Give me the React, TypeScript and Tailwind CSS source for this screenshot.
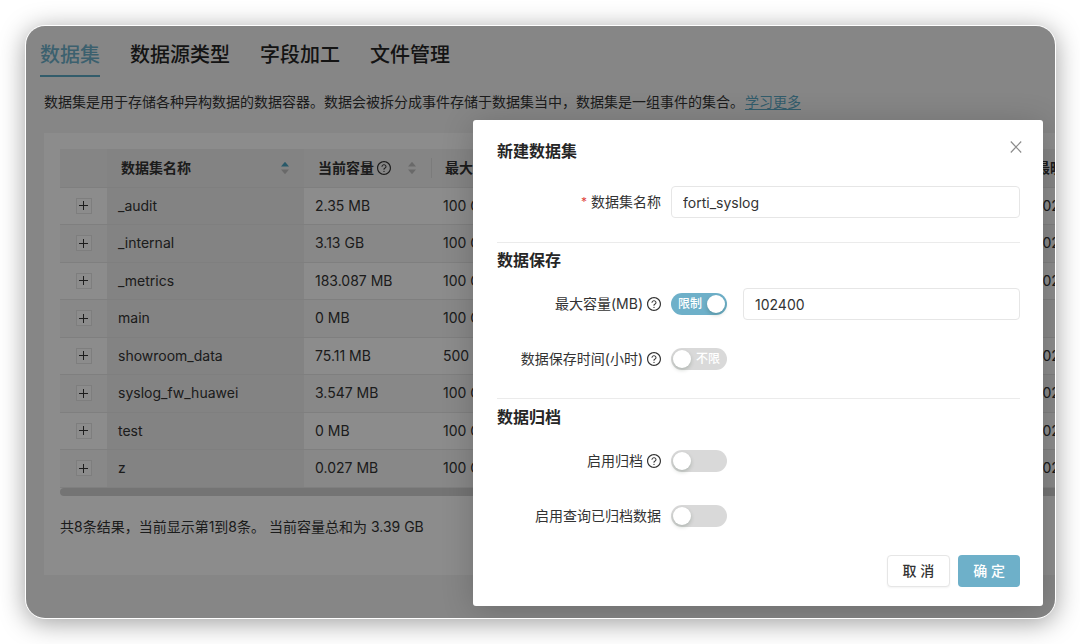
import { useState } from "react";
import type { ReactNode } from "react";

const tabs = ["数据集", "数据源类型", "字段加工", "文件管理"];

const rows = [
  { name: "_audit", used: "2.35 MB", max: "100 GB", latest: "2023" },
  { name: "_internal", used: "3.13 GB", max: "100 GB", latest: "2023" },
  { name: "_metrics", used: "183.087 MB", max: "100 GB", latest: "2023" },
  { name: "main", used: "0 MB", max: "100 GB", latest: "" },
  { name: "showroom_data", used: "75.11 MB", max: "500 GB", latest: "2023" },
  { name: "syslog_fw_huawei", used: "3.547 MB", max: "100 GB", latest: "2023" },
  { name: "test", used: "0 MB", max: "100 GB", latest: "2023" },
  { name: "z", used: "0.027 MB", max: "100 GB", latest: "2023" },
];

function HelpIcon() {
  return (
    <svg viewBox="64 64 896 896" className="size-[14px] shrink-0" fill="currentColor" aria-hidden="true">
      <path d="M512 64C264.6 64 64 264.6 64 512s200.600 448 448 448 448-200.600 448-448S759.400 64 512 64zm0 820c-205.400 0-372-166.600-372-372s166.600-372 372-372 372 166.600 372 372-166.600 372-372 372z" />
      <path d="M623.600 316.700C593.600 290.400 554 276 512 276s-81.600 14.500-111.600 40.700C369.200 344 352 380.700 352 420v7.600c0 4.400 3.600 8 8 8h48c4.400 0 8-3.600 8-8V420c0-44.100 43.100-80 96-80s96 35.900 96 80c0 31.100-22 59.600-56.100 72.700-21.200 8.100-39.200 22.300-52.100 40.900-13.100 19-19.900 41.800-19.900 64.900V620c0 4.400 3.600 8 8 8h48c4.400 0 8-3.600 8-8v-22.700a48.300 48.300 0 0 1 30.900-44.800c59-22.700 97.100-74.700 97.100-132.500.1-39.300-17.100-76-48.300-103.300zM472 732a40 40 0 1 0 80 0 40 40 0 1 0-80 0z" />
    </svg>
  );
}

function Sorter({ active = false }: { active?: boolean }) {
  return (
    <svg viewBox="0 0 10 14" className="h-[14px] w-[10px] shrink-0" aria-hidden="true">
      <path d="M5 0.800 L9 5.600 H1 Z" className={active ? "fill-[#4aa3c0]" : "fill-[#bfbfbf]"} />
      <path d="M5 13.200 L9 8.400 H1 Z" className="fill-[#bfbfbf]" />
    </svg>
  );
}

type SwitchProps = { id: string; defaultOn?: boolean; onText?: string; offText?: string };

function Switch({ id, defaultOn = false, onText, offText }: SwitchProps) {
  const [on, setOn] = useState(defaultOn);
  return (
    <button
      id={id}
      type="button"
      role="switch"
      aria-checked={on}
      onClick={() => setOn(!on)}
      className={`flex h-[22px] w-14 shrink-0 items-center justify-between rounded-full px-[2px] text-xs font-medium whitespace-nowrap text-white ${
        on ? "flex-row-reverse bg-[#6eb0c9]" : "bg-[#d9d9d9]"
      }`}
    >
      <span className="size-[18px] shrink-0 rounded-full bg-white shadow-[0_2px_4px_rgba(0,35,11,0.2)]" />
      <span className="px-[5px]">{on ? onText : offText}</span>
    </button>
  );
}

type FieldProps = { id: string; label: string; help?: boolean; required?: boolean; children: ReactNode };

function Field({ id, label, help, required, children }: FieldProps) {
  return (
    <div className="flex h-8 items-center">
      <label htmlFor={id} className="mr-[10px] flex w-[164px] shrink-0 items-center justify-end gap-1 whitespace-nowrap">
        {required && <span className="text-xs text-[#e0443c]">*</span>}
        {label}
        {help && <HelpIcon />}
      </label>
      {children}
    </div>
  );
}

const inputClass =
  "h-8 min-w-0 flex-1 rounded-[4px] border border-[#e6e6e6] bg-white px-[11px] text-sm text-[#333] outline-none";

function DatasetDialog() {
  return (
    <div
      role="dialog"
      aria-labelledby="dialog-title"
      className="flex w-[570px] max-w-full flex-col rounded-[3px] bg-white pr-[23px] pl-6 text-sm text-[#333] shadow-[0_4px_32px_rgba(0,0,0,0.2)]"
    >
      <div className="flex items-center justify-between pt-4">
        <h2 id="dialog-title" className="text-base leading-[30px] font-semibold text-[#262626]">新建数据集</h2>
        <button type="button" aria-label="关闭" className="-mr-[7px] mb-2 p-[5px] text-[#8c8c8c]">
          <svg viewBox="0 0 12 12" className="size-3" fill="none" stroke="currentColor" strokeWidth="1.2" aria-hidden="true">
            <path d="M0.800 0.500 L11.200 11.500 M11.200 0.500 L0.800 11.500" />
          </svg>
        </button>
      </div>
      <form className="flex flex-1 flex-col" onSubmit={(e) => e.preventDefault()}>
        <div className="border-b border-[#ebebeb] pt-5 pb-6">
          <Field id="dataset-name" label="数据集名称" required>
            <input id="dataset-name" type="text" defaultValue="forti_syslog" className={inputClass} />
          </Field>
        </div>
        <section className="border-b border-[#ebebeb] pt-[5px] pb-[23px]">
          <h3 className="text-base leading-6 font-semibold text-[#262626]">数据保存</h3>
          <div className="mt-4 flex flex-col gap-[23px]">
            <Field id="max-size" label="最大容量(MB)" help>
              <Switch id="max-size" defaultOn onText="限制" offText="不限" />
              <input type="text" aria-label="最大容量" defaultValue="102400" className={`ml-4 ${inputClass}`} />
            </Field>
            <Field id="keep-time" label="数据保存时间(小时)" help>
              <Switch id="keep-time" onText="限制" offText="不限" />
            </Field>
          </div>
        </section>
        <section className="pt-[6px]">
          <h3 className="text-base leading-6 font-semibold text-[#262626]">数据归档</h3>
          <div className="mt-4 flex flex-col gap-[23px]">
            <Field id="archive" label="启用归档" help>
              <Switch id="archive" />
            </Field>
            <Field id="archive-query" label="启用查询已归档数据">
              <Switch id="archive-query" />
            </Field>
          </div>
        </section>
        <div className="flex justify-end gap-2 pt-[23px] pb-[19px]">
          <button type="button" className="h-8 rounded-[4px] border border-[#e6e6e6] bg-white px-[15px] font-medium shadow-xs">取 消</button>
          <button type="submit" className="h-8 rounded-[4px] bg-[#6eb0c9] px-[15px] font-medium text-white">确 定</button>
        </div>
      </form>
    </div>
  );
}

function DatasetTable() {
  return (
    <div className="overflow-hidden">
      <table className="w-full min-w-[1100px] table-fixed border-collapse text-left text-sm">
        <colgroup>
          <col className="w-[47px]" />
          <col className="w-[197px]" />
          <col className="w-[127px]" />
          <col className="w-[591px]" />
          <col />
        </colgroup>
        <thead>
          <tr className="h-[38px] border-b border-[#e8e8e8] bg-[#f3f3f3] whitespace-nowrap">
            <th aria-label="展开" />
            <th className="bg-[#eeeeee] px-[14px] font-semibold">
              <span className="flex items-center justify-between">数据集名称<Sorter active /></span>
            </th>
            <th className="px-[14px] font-semibold">
              <span className="flex items-center gap-[3px]">
                当前容量<HelpIcon />
                <span className="ml-auto flex"><Sorter /></span>
              </span>
            </th>
            <th className="font-semibold"><span className="block border-l border-[#e0e0e0] pl-[13px]">最大容量</span></th>
            <th className="pl-[14px] font-semibold">最晚</th>
          </tr>
        </thead>
        <tbody>
          {rows.map((r) => (
            <tr key={r.name} className="border-b border-[#e8e8e8] whitespace-nowrap odd:h-[37px] even:h-[38px] even:bg-[#f8f8f8]">
              <td>
                <button type="button" aria-label={`展开 ${r.name}`} className="mx-auto flex size-4 items-center justify-center border border-[#e6e6e6] bg-white">
                  <svg viewBox="0 0 9 9" className="size-[9px]" fill="none" stroke="currentColor" aria-hidden="true">
                    <path d="M4.500 0 V9 M0 4.500 H9" />
                  </svg>
                </button>
              </td>
              <td className="bg-[#eeeeee] px-[11px]">{r.name}</td>
              <td className="px-[11px]">{r.used}</td>
              <td className="px-3">{r.max}</td>
              <td className="px-3">{r.latest}</td>
            </tr>
          ))}
        </tbody>
      </table>
      <div className="h-2 rounded-l-full bg-[#d4d4d4]" />
    </div>
  );
}

export default function App() {
  return (
    <div className="min-h-screen bg-white pt-[25px] pr-6 pb-[25px] pl-[25px] font-['Inter','Noto_Sans_CJK_SC',sans-serif]">
      <div className="relative overflow-hidden rounded-[20px] border border-white bg-[#f5f5f5] text-[#333] shadow-[0_4px_26px_rgba(0,0,0,0.38)]">
        <main className="pb-[43px]">
          <nav className="flex gap-[30px] px-[14px] pt-[14px] text-xl font-medium text-[#262626]">
            {tabs.map((t, i) => (
              <a
                key={t}
                href="#"
                className={`border-b-2 pb-[5px] leading-[30px] ${i === 0 ? "border-[#5ba8c4] text-[#6eb0c9]" : "border-transparent"}`}
              >
                {t}
              </a>
            ))}
          </nav>
          <p className="mt-[13px] flex items-center gap-px pl-[18px] text-sm leading-6 whitespace-nowrap">
            数据集是用于存储各种异构数据的数据容器。数据会被拆分成事件存储于数据集当中，数据集是一组事件的集合。
            <a href="#" className="text-[#5ba8c4] underline underline-offset-2">学习更多</a>
          </p>
          <section className="mt-[19px] ml-[18px] bg-white pt-4 pb-9 pl-4">
            <DatasetTable />
            <p className="pt-[19px] text-sm leading-6">共8条结果，当前显示第1到8条。 当前容量总和为 3.39 GB</p>
          </section>
        </main>
        <div className="absolute inset-0 flex items-start justify-end bg-black/45 pt-[94px] pr-3">
          <DatasetDialog />
        </div>
      </div>
    </div>
  );
}
